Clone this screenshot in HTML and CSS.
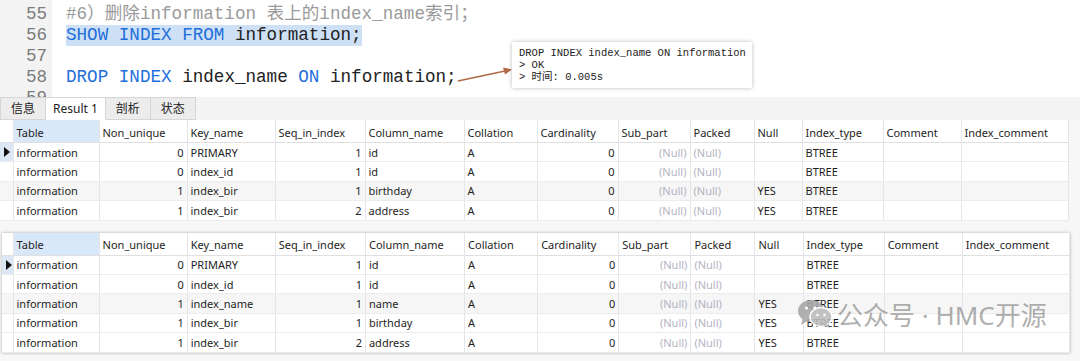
FILE: index.html
```html
<!DOCTYPE html>
<html lang="zh-CN">
<head>
    <meta charset="UTF-8">
    <title>SHOW INDEX</title>
    <link rel="stylesheet" href="styles.css">
</head>
<body>
    <div class="editor">
        <div class="gutter">
            <div>55</div>
            <div>56</div>
            <div>57</div>
            <div>58</div>
            <div>59</div>
        </div>
        <div class="code">
            <div class="comment">#6）删除information 表上的index_name索引；</div>
            <div><span class="sel"><span class="kw">SHOW INDEX FROM</span> information;</span></div>
            <div>&nbsp;</div>
            <div><span class="kw">DROP INDEX</span> index_name <span class="kw">ON</span> information;</div>
            <div>&nbsp;</div>
        </div>

        <svg class="arrow" width="60" height="24" viewBox="0 0 60 24">
            <line x1="3" y1="18" x2="50" y2="8" stroke="#b06a45" stroke-width="1.6"/>
            <polygon points="57,6.5 48,4.5 50,11.5" fill="#b06a45"/>
        </svg>
        <div class="tip">
            <div>DROP INDEX index_name ON information</div>
            <div>&gt; OK</div>
            <div>&gt; 时间: 0.005s</div>
        </div>
    </div>

    <div class="tabs">
        <div class="tab">信息</div>
        <div class="tab active">Result 1</div>
        <div class="tab">剖析</div>
        <div class="tab">状态</div>
    </div>

    <div class="grid-wrap first">
        <table class="grid">
            <colgroup>
                <col style="width:13px"><col style="width:86px"><col style="width:88px"><col style="width:88px">
                <col style="width:90px"><col style="width:99px"><col style="width:73px"><col style="width:81px">
                <col style="width:72px"><col style="width:64px"><col style="width:48px"><col style="width:81px">
                <col style="width:78px"><col style="width:107px">
            </colgroup>
            <thead>
                <tr>
                    <th class="ind"></th><th class="cur">Table</th><th>Non_unique</th><th>Key_name</th><th>Seq_in_index</th>
                    <th>Column_name</th><th>Collation</th><th>Cardinality</th><th>Sub_part</th><th>Packed</th>
                    <th>Null</th><th>Index_type</th><th>Comment</th><th>Index_comment</th>
                </tr>
            </thead>
            <tbody>
                <tr>
                    <td class="ind on"><span class="mark"></span></td><td>information</td><td class="num">0</td><td>PRIMARY</td><td class="num">1</td>
                    <td>id</td><td>A</td><td class="num">0</td><td class="num nul">(Null)</td><td class="nul">(Null)</td>
                    <td></td><td>BTREE</td><td></td><td></td>
                </tr>
                <tr>
                    <td class="ind"></td><td>information</td><td class="num">0</td><td>index_id</td><td class="num">1</td>
                    <td>id</td><td>A</td><td class="num">0</td><td class="num nul">(Null)</td><td class="nul">(Null)</td>
                    <td></td><td>BTREE</td><td></td><td></td>
                </tr>
                <tr class="alt">
                    <td class="ind"></td><td>information</td><td class="num">1</td><td>index_bir</td><td class="num">1</td>
                    <td>birthday</td><td>A</td><td class="num">0</td><td class="num nul">(Null)</td><td class="nul">(Null)</td>
                    <td>YES</td><td>BTREE</td><td></td><td></td>
                </tr>
                <tr>
                    <td class="ind"></td><td>information</td><td class="num">1</td><td>index_bir</td><td class="num">2</td>
                    <td>address</td><td>A</td><td class="num">0</td><td class="num nul">(Null)</td><td class="nul">(Null)</td>
                    <td>YES</td><td>BTREE</td><td></td><td></td>
                </tr>
            </tbody>
        </table>
    </div>

    <div class="grid-wrap second">
        <table class="grid">
            <colgroup>
                <col style="width:11px"><col style="width:86px"><col style="width:88px"><col style="width:88px">
                <col style="width:90px"><col style="width:99px"><col style="width:73px"><col style="width:81px">
                <col style="width:72px"><col style="width:64px"><col style="width:48px"><col style="width:81px">
                <col style="width:78px"><col style="width:107px">
            </colgroup>
            <thead>
                <tr>
                    <th class="ind"></th><th class="cur">Table</th><th>Non_unique</th><th>Key_name</th><th>Seq_in_index</th>
                    <th>Column_name</th><th>Collation</th><th>Cardinality</th><th>Sub_part</th><th>Packed</th>
                    <th>Null</th><th>Index_type</th><th>Comment</th><th>Index_comment</th>
                </tr>
            </thead>
            <tbody>
                <tr>
                    <td class="ind on"><span class="mark"></span></td><td>information</td><td class="num">0</td><td>PRIMARY</td><td class="num">1</td>
                    <td>id</td><td>A</td><td class="num">0</td><td class="num nul">(Null)</td><td class="nul">(Null)</td>
                    <td></td><td>BTREE</td><td></td><td></td>
                </tr>
                <tr>
                    <td class="ind"></td><td>information</td><td class="num">0</td><td>index_id</td><td class="num">1</td>
                    <td>id</td><td>A</td><td class="num">0</td><td class="num nul">(Null)</td><td class="nul">(Null)</td>
                    <td></td><td>BTREE</td><td></td><td></td>
                </tr>
                <tr class="alt">
                    <td class="ind"></td><td>information</td><td class="num">1</td><td>index_name</td><td class="num">1</td>
                    <td>name</td><td>A</td><td class="num">0</td><td class="num nul">(Null)</td><td class="nul">(Null)</td>
                    <td>YES</td><td>BTREE</td><td></td><td></td>
                </tr>
                <tr>
                    <td class="ind"></td><td>information</td><td class="num">1</td><td>index_bir</td><td class="num">1</td>
                    <td>birthday</td><td>A</td><td class="num">0</td><td class="num nul">(Null)</td><td class="nul">(Null)</td>
                    <td>YES</td><td>BTREE</td><td></td><td></td>
                </tr>
                <tr>
                    <td class="ind"></td><td>information</td><td class="num">1</td><td>index_bir</td><td class="num">2</td>
                    <td>address</td><td>A</td><td class="num">0</td><td class="num nul">(Null)</td><td class="nul">(Null)</td>
                    <td>YES</td><td>BTREE</td><td></td><td></td>
                </tr>
            </tbody>
        </table>

        <div class="watermark">
            <svg width="36" height="30" viewBox="0 0 36 30">
                <ellipse cx="14" cy="12" rx="13" ry="11" fill="#a8a8a8"/>
                <polygon points="6,19 4,26 12,21" fill="#a8a8a8"/>
                <ellipse cx="24" cy="18" rx="11" ry="9.5" fill="#bdbdbd" stroke="#fff" stroke-width="1.5"/>
                <polygon points="30,25 33,29 26,26" fill="#bdbdbd"/>
                <circle cx="9.5" cy="9" r="1.6" fill="#fff"/>
                <circle cx="18" cy="9" r="1.6" fill="#fff"/>
                <circle cx="20.5" cy="16" r="1.3" fill="#fff"/>
                <circle cx="27.5" cy="16" r="1.3" fill="#fff"/>
            </svg>
            <span>公众号 · HMC开源</span>
        </div>
    </div>
</body>
</html>
```

FILE: styles.css
```css
body {
    margin: 0;
    width: 1080px;
    height: 361px;
    overflow: hidden;
    background: #f7f7f7;
    font-family: "Noto Sans", "Noto Sans CJK SC", sans-serif;
    color: #1e1e1e;
}

.editor {
    position: relative;
    height: 97px;
    display: flex;
    background: #fff;
    overflow: hidden;
    font-family: "Liberation Mono", "Noto Sans CJK SC", monospace;
    font-size: 17.6px;
    line-height: 21px;
}

.gutter {
    width: 47px;
    padding: 4px 5px 0 0;
    background: #f3f3f3;
    color: #7c7c7c;
    text-align: right;
}

.code {
    padding: 4px 0 0 14px;
    color: #222;
}

.code div {
    white-space: pre;
}

.comment {
    color: #9a9a9a;
}

.kw {
    color: #1f6fdc;
}

.sel {
    background: #cde0f5;
    padding-bottom: 1px;
}

.arrow {
    position: absolute;
    left: 455px;
    top: 63px;
}

.tip {
    position: absolute;
    left: 512px;
    top: 42px;
    width: 226px;
    padding: 5px 7px 5px 7px;
    background: #fff;
    box-shadow: 0 0 4px rgba(0, 0, 0, 0.28);
    font-family: "Liberation Mono", "Noto Sans CJK SC", monospace;
    font-size: 10.5px;
    line-height: 12px;
    color: #222;
    white-space: nowrap;
}

.tabs {
    display: flex;
    height: 23px;
    background: #f4f4f4;
    font-size: 12px;
}

.tab {
    padding: 0 10px;
    line-height: 21px;
    background: #ececec;
    border: 1px solid #d6d6d6;
    border-left: none;
    color: #222;
}

.tab:first-child {
    border-left: 1px solid #d6d6d6;
}

.tab.active {
    background: #fff;
    border-bottom-color: #fff;
    padding: 0 7px;
}

.grid-wrap {
    position: relative;
    background: #fff;
}

.grid-wrap.first {
    width: 1068px;
}

.grid-wrap.second {
    width: 1068px;
    margin: 12px 0 0 2px;
    box-shadow: 0 0 3px rgba(0, 0, 0, 0.3);
}

.grid {
    border-collapse: collapse;
    table-layout: fixed;
    width: 1068px;
    font-size: 11px;
}

.grid th,
.grid td {
    padding: 0 3px;
    border-right: 1px solid #e6e6e6;
    border-bottom: 1px solid #ececec;
    white-space: nowrap;
    overflow: hidden;
    text-align: left;
    font-weight: normal;
}

.grid th {
    height: 20px;
    padding-top: 2px;
    border-bottom-color: #e0e0e0;
}

.grid td {
    height: 18.4px;
}

.grid th.cur {
    background: #d9e8f8;
}

.grid .ind {
    padding: 0;
    background: #fff;
}

.grid .ind.on {
    background: #dbe7f4;
}

.mark {
    display: block;
    width: 0;
    height: 0;
    margin-left: 4px;
    border-left: 6px solid #111;
    border-top: 5px solid transparent;
    border-bottom: 5px solid transparent;
}

.grid .num {
    text-align: right;
}

.grid .nul {
    color: #b3b3c2;
}

.grid tr.alt td {
    background: #f6f6f6;
}

.watermark {
    position: absolute;
    left: 795px;
    top: 62px;
    display: flex;
    align-items: center;
    gap: 4px;
    font-family: "Noto Sans", "Noto Sans CJK SC", sans-serif;
    font-size: 26px;
    color: rgba(110, 110, 110, 0.62);
    opacity: 0.9;
}
```
